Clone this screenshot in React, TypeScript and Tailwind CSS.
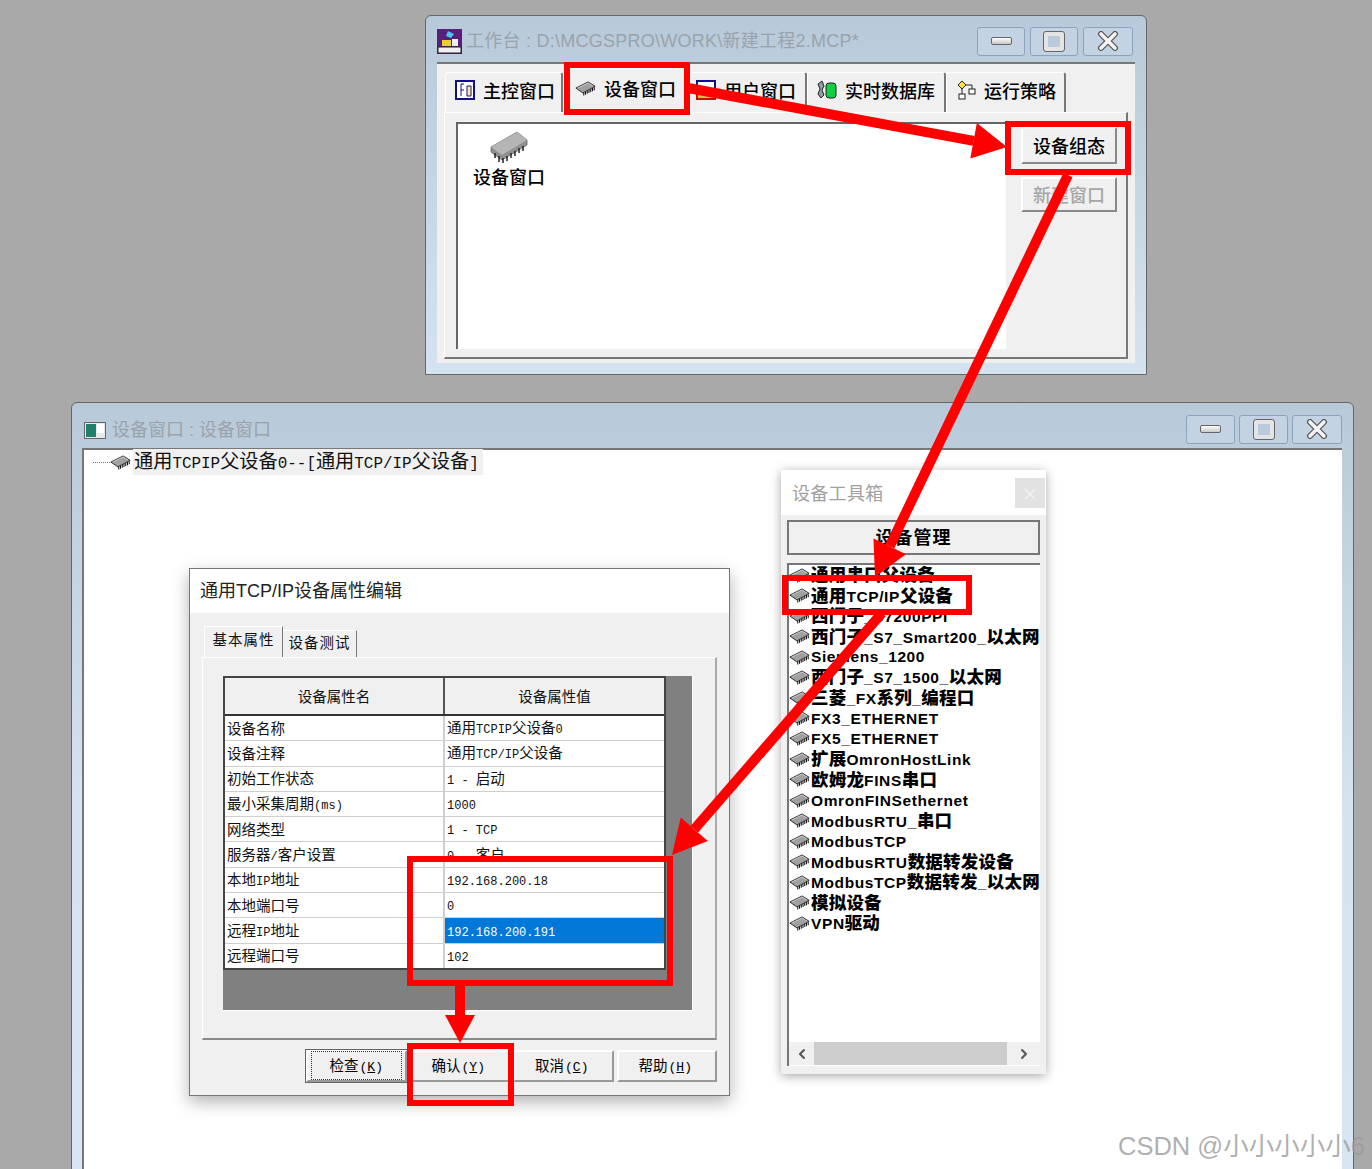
import type { ReactNode } from "react";
import { ChevronLeft, ChevronRight } from "lucide-react";

const cjkFont = "font-['Noto_Sans_CJK_SC','Liberation_Sans',sans-serif]";

const rows = [
  ["设备名称", "通用TCPIP父设备0"],
  ["设备注释", "通用TCP/IP父设备"],
  ["初始工作状态", "1 - 启动"],
  ["最小采集周期(ms)", "1000"],
  ["网络类型", "1 - TCP"],
  ["服务器/客户设置", "0 - 客户"],
  ["本地IP地址", "192.168.200.18"],
  ["本地端口号", "0"],
  ["远程IP地址", "192.168.200.191"],
  ["远程端口号", "102"],
];

const devices = [
  "通用串口父设备",
  "通用TCP/IP父设备",
  "西门子_S7200PPI",
  "西门子_S7_Smart200_以太网",
  "Siemens_1200",
  "西门子_S7_1500_以太网",
  "三菱_FX系列_编程口",
  "FX3_ETHERNET",
  "FX5_ETHERNET",
  "扩展OmronHostLink",
  "欧姆龙FINS串口",
  "OmronFINSethernet",
  "ModbusRTU_串口",
  "ModbusTCP",
  "ModbusRTU数据转发设备",
  "ModbusTCP数据转发_以太网",
  "模拟设备",
  "VPN驱动",
];

// half-width latin next to full-width CJK, like SimSun
function Mixed({ text }: { text: string }) {
  const parts = text.match(/[\x20-\x7e]+|[^\x20-\x7e]+/g) ?? [];
  return (
    <>
      {parts.map((part, i) =>
        /[\x20-\x7e]/.test(part[0]) ? (
          <span key={i} className="font-['Liberation_Mono',monospace] text-[0.83em] whitespace-pre">
            {part}
          </span>
        ) : (
          <span key={i}>{part}</span>
        ),
      )}
    </>
  );
}

function Chip({ className }: { className: string }) {
  return (
    <svg viewBox="0 0 24 17" className={className}>
      <path
        d="M10 13v3.5M12 12v3.5M14 11v3.5M16 10v3.5M18 9v3.5M20 8v3.5M22 7v3.5"
        stroke="#111"
        strokeWidth="1.2"
      />
      <path d="M1 8 L15 1 L23 6 L9 13.5 Z" fill="#a0a0a0" stroke="#2a2a2a" strokeWidth="1.1" />
      <path d="M3 8 L15 2.2 L20.5 5.8" fill="none" stroke="#dedede" strokeWidth="0.8" />
    </svg>
  );
}

function BigChip() {
  return (
    <svg viewBox="0 0 40 34" className="w-[40px] h-[34px]">
      <path d="M2 17 L28 2 L38 10 L38 15 L13 30 L2 22 Z" fill="#8f8f8f" stroke="#666" strokeWidth="0.8" />
      <path d="M2 17 L28 2 L38 10 L13 25 Z" fill="#b5b5b5" />
      <g stroke="#222" strokeWidth="1.5">
        <path d="M6 23v5M10 26v6M14 28v5M18 26v5M22 23v5M26 21v5M30 18v5M34 16v5" />
      </g>
    </svg>
  );
}

function WinButtons({ w, gap }: { w: string; gap: string }) {
  const base = "h-full rounded-[3px] border border-[#8da3bd] bg-[#c3d3e4] flex items-center justify-center";
  return (
    <div className={`flex ${gap} h-[29px]`}>
      <div className={`${w} ${base}`}>
        <div className="w-[21px] h-[8px] rounded-[2px] border border-[#666] bg-gradient-to-b from-white to-[#c8c8c8]" />
      </div>
      <div className={`${w} ${base}`}>
        <div className="w-[20px] h-[19px] rounded-[2px] border-[4px] border-[#e4e4e4] outline outline-1 outline-[#666] bg-[#b9cadb]" />
      </div>
      <div className={`w-[50px] ${base}`}>
        <svg viewBox="0 0 22 20" className="w-[22px] h-[20px]">
          <path d="M4 3 L18 17 M18 3 L4 17" stroke="#555" strokeWidth="6" strokeLinecap="round" />
          <path d="M4 3 L18 17 M18 3 L4 17" stroke="#f4f4f4" strokeWidth="3.6" strokeLinecap="round" />
        </svg>
      </div>
    </div>
  );
}

function Tab({ w, label, icon, h = "h-[40px]", pl = "pl-[9px]" }: { w: string; label: string; icon: ReactNode; h?: string; pl?: string }) {
  return (
    <div className={`${w} ${h} ${pl} flex items-center gap-[8px] pb-[5px] border-t border-r-2 border-l border-t-white border-l-white border-r-[#777] rounded-t-[3px] bg-[#f0f0f0] text-[18px] font-medium text-black whitespace-nowrap`}>
      {icon}
      {label}
    </div>
  );
}

function RaisedButton({ label, disabled, className }: { label: string; disabled?: boolean; className: string }) {
  return (
    <div
      className={`${className} flex items-center justify-center bg-[#f0f0f0] border-t-2 border-l-2 border-t-white border-l-white border-r-2 border-b-2 border-r-[#888] border-b-[#888] text-[18px] font-medium ${disabled ? "text-[#a5a5a5]" : "text-black"}`}
    >
      {label}
    </div>
  );
}

function DialogButton({ label, hot, focused }: { label: string; hot: string; focused?: boolean }) {
  return (
    <div
      className={`h-[32px] flex items-center justify-center pb-[1px] bg-[#f0f0f0] text-[14.5px] text-black border-t-2 border-l-2 border-t-white border-l-white border-r-2 border-b-2 border-r-[#999] border-b-[#999] ${focused ? "outline outline-1 outline-[#666]" : ""}`}
    >
      <span className={focused ? "border border-dotted border-[#333] px-[18px] py-[2px]" : "pr-[3px]"}>
        {label}
        <span className="font-['Liberation_Mono',monospace] text-[13px] ml-[1px]">
          (<u>{hot}</u>)
        </span>
      </span>
    </div>
  );
}

function Arrow({ x1, y1, x2, y2, width, head, spread }: { x1: number; y1: number; x2: number; y2: number; width: number; head: number; spread: number }) {
  const len = Math.hypot(x2 - x1, y2 - y1);
  const ux = (x2 - x1) / len;
  const uy = (y2 - y1) / len;
  const bx = x2 - ux * head;
  const by = y2 - uy * head;
  const points = `${x2},${y2} ${bx - uy * spread},${by + ux * spread} ${bx + uy * spread},${by - ux * spread}`;
  return (
    <>
      <line x1={x1} y1={y1} x2={bx} y2={by} stroke="#ff0000" strokeWidth={width} />
      <polygon points={points} fill="#ff0000" />
    </>
  );
}

function Box({ x, y, w, h }: { x: number; y: number; w: number; h: number }) {
  return <rect x={x + 3} y={y + 3} width={w - 6} height={h - 6} fill="none" stroke="#ff0000" strokeWidth="6" />;
}

export default function App() {
  return (
    <div className={`relative w-[1372px] h-[1169px] overflow-hidden bg-[#a9a9a9] ${cjkFont}`}>
      {/* 工作台 */}
      <div className="absolute left-[425px] top-[15px] w-[722px] h-[360px] flex flex-col border border-[#666] rounded-t-[6px] bg-gradient-to-b from-[#b8c9d9] to-[#d5e3f1] px-[11px]">
        <div className="h-[46px] flex items-center justify-between pt-[4px] pr-[2px]">
          <div className="flex items-center gap-[4px]">
            <svg viewBox="0 0 25 25" className="w-[25px] h-[25px]">
              <rect width="25" height="25" fill="#5a1f7a" />
              <path d="M11 2 L17 5 L14 9 L9 7 Z" fill="#45c8e8" />
              <rect x="5" y="11" width="9" height="6" fill="#e8d040" />
              <rect x="15" y="10" width="6" height="7" fill="#f0f0f0" />
              <rect x="1" y="18" width="23" height="6" fill="#f0f0f0" stroke="#222" />
            </svg>
            <span className="pt-[1px] text-[18px] tracking-[0.25px] text-[#9aa3ab] font-['Liberation_Sans','Noto_Sans_CJK_SC',sans-serif] whitespace-nowrap">
              工作台 : D:\MCGSPRO\WORK\新建工程2.MCP*
            </span>
          </div>
          <WinButtons w="w-[48px]" gap="gap-[5px]" />
        </div>
        <div className="h-[301px] bg-[#f0f0f0] border-t-2 border-t-[#777] flex flex-col">
          <div className="flex items-end pl-[8px] pt-[6px] h-[48px]">
            <Tab
              w="w-[118px]"
              label="主控窗口"
              icon={
                <svg viewBox="0 0 20 20" className="w-[20px] h-[20px] shrink-0">
                  <rect x="1" y="1" width="18" height="18" fill="#fff" stroke="#101080" strokeWidth="2" />
                  <path d="M6 4v12M6 4h3M6 10h3M12 6v10h4V6z" fill="#ffe9a0" stroke="#101080" />
                </svg>
              }
            />
            <Tab w="w-[127px]" h="h-[44px]" pl="pl-[11px]" label="设备窗口" icon={<Chip className="w-[21px] h-[15px] shrink-0" />} />
            <Tab
              w="w-[117px]"
              pl="pl-[5px]"
              label="用户窗口"
              icon={
                <svg viewBox="0 0 20 20" className="w-[20px] h-[20px] shrink-0">
                  <rect x="1" y="1" width="18" height="18" fill="#fff" stroke="#101080" strokeWidth="2" />
                  <rect x="1" y="11" width="18" height="8" fill="#d8c040" stroke="#c01010" strokeWidth="2" />
                </svg>
              }
            />
            <Tab
              w="w-[139px]"
              label="实时数据库"
              icon={
                <svg viewBox="0 0 20 20" className="w-[20px] h-[20px] shrink-0">
                  <path d="M1 4 L5 1 L7 6 L5 10 L7 15 L4 18 L1 14 L3 9 Z" fill="#8ea0a0" stroke="#222" />
                  <rect x="9" y="3" width="10" height="15" rx="3" fill="#10d040" stroke="#222" />
                </svg>
              }
            />
            <Tab
              w="w-[120px]"
              label="运行策略"
              icon={
                <svg viewBox="0 0 20 20" className="w-[20px] h-[20px] shrink-0">
                  <path d="M6 1 L10 5 L6 9 L2 5 Z" fill="#ffe040" stroke="#222" />
                  <path d="M6 9v6M10 5h6v4" fill="none" stroke="#222" />
                  <rect x="3" y="14" width="6" height="5" fill="#fff" stroke="#222" />
                  <rect x="13" y="9" width="6" height="5" fill="#fff" stroke="#222" />
                </svg>
              }
            />
          </div>
          <div className="mx-[7px] h-[247px] flex border-t border-l border-t-white border-l-white border-r-2 border-b-2 border-r-[#777] border-b-[#777] pl-[11px] pt-[9px] pb-[8px]">
            <div className="w-[550px] border-t-2 border-l-2 border-t-[#666] border-l-[#666] bg-white flex flex-col items-center">
              <div className="self-start ml-[15px] flex flex-col items-center pt-[6px]">
                <BigChip />
                <span className="text-[18px] leading-[20px] font-medium mt-[2px] text-black">设备窗口</span>
              </div>
            </div>
            <div className="flex flex-col pl-[15px] pt-[5px] gap-[13px]">
              <RaisedButton className="w-[96px] h-[37px]" label="设备组态" />
              <RaisedButton className="w-[96px] h-[35px]" label="新建窗口" disabled />
            </div>
          </div>
        </div>
      </div>

      {/* 设备窗口 */}
      <div className="absolute left-[71px] top-[402px] w-[1283px] h-[800px] flex flex-col border border-[#666] rounded-t-[6px] bg-gradient-to-b from-[#b8c9d9] via-[#d5e3f1] to-[#d8e6f4] pl-[10px] pr-[11px]">
        <div className="h-[45px] flex items-center justify-between pt-[7px]">
          <div className="flex items-center gap-[6px] pl-[2px] pt-[2px]">
            <svg viewBox="0 0 22 17" className="w-[22px] h-[17px]">
              <rect x="0.5" y="0.5" width="21" height="16" fill="#e8e8e8" stroke="#666" />
              <rect x="2" y="2" width="10" height="13" fill="#1f7f6a" />
              <rect x="13" y="2" width="7" height="9" fill="#fff" />
            </svg>
            <span className="text-[18px] text-[#9aa3ab] font-['Liberation_Sans','Noto_Sans_CJK_SC',sans-serif]">设备窗口 : 设备窗口</span>
          </div>
          <WinButtons w="w-[49px]" gap="gap-[4px]" />
        </div>
        <div className="flex-1 bg-white border-t-2 border-l-2 border-t-[#777] border-l-[#777]">
          <div className="flex items-center h-[22px] mt-[1px] pl-[9px]">
            <div className="w-[17px] border-t border-dotted border-[#777]" />
            <Chip className="w-[21px] h-[15px] shrink-0" />
            <span className="ml-[2px] bg-[#f0f0f0] text-[19.2px] leading-[22px] text-[#111] whitespace-nowrap pl-[1px] pr-[4px]">
              <Mixed text="通用TCPIP父设备0--[通用TCP/IP父设备]" />
            </span>
          </div>
        </div>
      </div>

      {/* 属性编辑 */}
      <div className="absolute left-[189px] top-[568px] w-[541px] h-[528px] flex flex-col border border-[#777] bg-[#f0f0f0] shadow-[0_6px_16px_rgba(0,0,0,0.3)]">
        <div className="h-[44px] flex items-center bg-white pl-[10px] text-[18px] text-[#222] font-['Liberation_Sans','Noto_Sans_CJK_SC',sans-serif]">
          通用TCP/IP设备属性编辑
        </div>
        <div className="flex-1 flex flex-col px-[12px]">
          <div className="flex items-end h-[44px] pl-[2px]">
            <div className="w-[79px] h-[31px] flex items-center justify-center border-t border-l border-t-white border-l-white border-r border-r-[#777] text-[14.5px] tracking-[1px] text-[#111] pb-[7px]">
              基本属性
            </div>
            <div className="w-[74px] h-[27px] flex items-center justify-center border-t border-r border-t-white border-r-[#777] text-[14.5px] tracking-[1px] text-[#111] pb-[5px]">
              设备测试
            </div>
          </div>
          <div className="h-[383px] flex flex-col border-t border-l border-t-white border-l-white border-r-2 border-b-2 border-r-[#aaa] border-b-[#888] pl-[20px] pt-[18px]">
            <div className="w-[470px] h-[335px] bg-[#808080] border-b border-r border-b-white border-r-white">
              <div className="w-[443px] h-[294px] bg-white border-2 border-[#444] flex flex-col text-[14.5px] text-[#111]">
                <div className="grid grid-cols-[220px_1fr] h-[38px] bg-[#f0f0f0] border-b-2 border-b-[#333]">
                  <div className="flex items-center justify-center border-r-2 border-r-[#555]">设备属性名</div>
                  <div className="flex items-center justify-center">设备属性值</div>
                </div>
                {rows.map(([name, value]) => {
                  const selected = value === "192.168.200.191";
                  return (
                    <div key={name} className="grid grid-cols-[220px_1fr] flex-1 border-b border-b-[#cfcfcf] last:border-b-0">
                      <div className="flex items-center pl-[2px] pb-[1px] border-r-2 border-r-[#cfcfcf] whitespace-nowrap">
                        <span>
                          <Mixed text={name} />
                        </span>
                      </div>
                      <div className={`flex items-center pl-[2px] pb-[1px] whitespace-nowrap ${selected ? "bg-[#0078d7] text-white" : ""}`}>
                        <span>
                          <Mixed text={value} />
                        </span>
                      </div>
                    </div>
                  );
                })}
              </div>
            </div>
          </div>
          <div className="grid grid-cols-4 gap-[3px] ml-[104px] mt-[10px]">
            <DialogButton label="检查" hot="K" focused />
            <DialogButton label="确认" hot="Y" />
            <DialogButton label="取消" hot="C" />
            <DialogButton label="帮助" hot="H" />
          </div>
        </div>
      </div>

      {/* 设备工具箱 */}
      <div className="absolute left-[781px] top-[470px] w-[265px] h-[604px] flex flex-col bg-[#f0f0f0] shadow-[0_2px_10px_rgba(0,0,0,0.35)]">
        <div className="h-[45px] flex items-center justify-between bg-white pl-[11px] pr-[1px]">
          <span className="text-[18px] text-[#a0a0a0] tracking-[0.3px]">设备工具箱</span>
          <div className="w-[30px] h-[30px] bg-[#e2e2e2] flex items-center justify-center text-[#f4f4f4] text-[16px]">×</div>
        </div>
        <div className="flex-1 flex flex-col px-[6px] pt-[5px]">
          <div className="h-[35px] w-[253px] flex items-center justify-center pb-[2px] border-2 border-[#777] bg-[#f0f0f0] text-[18px] font-bold tracking-[1px] text-black">
            设备管理
          </div>
          <div className="mt-[8px] h-[503px] w-[253px] flex flex-col border-t-2 border-l-2 border-t-[#777] border-l-[#777] bg-white overflow-hidden">
            <div className="flex-1">
              {devices.map((d) => (
                <div key={d} className="h-[20.47px] flex items-center whitespace-nowrap font-bold text-[17.5px] text-black font-['Liberation_Sans','Noto_Sans_CJK_SC',sans-serif]">
                  <Chip className="w-[21px] h-[15px] shrink-0" />
                  <span className="ml-[1px] text-[15.5px] tracking-[0.6px] [&_b]:text-[17.5px] [&_b]:tracking-[0.2px]">
                    {(d.match(/[\x20-\x7e]+|[^\x20-\x7e]+/g) ?? []).map((part, i) =>
                      /[\x20-\x7e]/.test(part[0]) ? <span key={i}>{part}</span> : <b key={i}>{part}</b>,
                    )}
                  </span>
                </div>
              ))}
            </div>
            <div className="h-[23px] mb-[1px] flex items-center bg-[#f0f0f0] text-[#555]">
              <div className="w-[25px] flex justify-center">
                <ChevronLeft size={16} strokeWidth={3} />
              </div>
              <div className="w-[193px] h-full bg-[#cdcdcd]" />
              <div className="flex-1 flex justify-center">
                <ChevronRight size={16} strokeWidth={3} />
              </div>
            </div>
          </div>
        </div>
      </div>

      {/* 红色标注 */}
      <svg viewBox="0 0 1372 1169" className="absolute inset-0 w-[1372px] h-[1169px] pointer-events-none">
        <Box x={564} y={62} w={126} h={53} />
        <Box x={1005} y={121} w={126} h={54} />
        <Box x={782} y={575} w={190} h={40} />
        <Box x={407} y={856} w={266} h={130} />
        <Box x={407} y={1043} w={107} h={63} />
        <Arrow x1={688} y1={88} x2={1007} y2={147} width={10} head={34} spread={18} />
        <Arrow x1={1068} y1={175} x2={875} y2={577} width={10} head={34} spread={18} />
        <Arrow x1={882} y1={613} x2={672} y2={855} width={10} head={34} spread={18} />
        <Arrow x1={460} y1={986} x2={460} y2={1043} width={10} head={28} spread={15} />
      </svg>

      <div className="absolute left-[1118px] top-[1127px] text-[25.5px] text-[#9a9a9a]/80 whitespace-nowrap font-['Liberation_Sans','Noto_Sans_CJK_SC',sans-serif]">
        CSDN @小小小小小6
      </div>
    </div>
  );
}
